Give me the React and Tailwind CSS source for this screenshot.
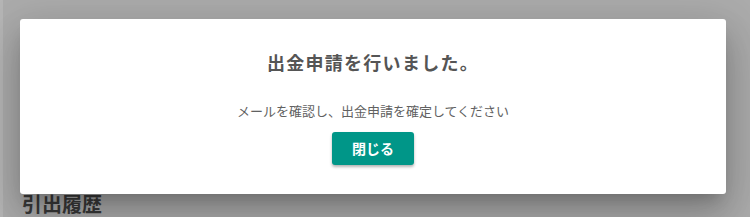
import React from 'react';

export default function App() {
  return (
    <div className="relative w-[750px] h-[217px] overflow-hidden bg-[#acacac] font-['Noto_Sans_CJK_JP',_'Noto_Sans',_sans-serif]">
      {/* page behind the dimmed overlay */}
      <div className="flex h-full">
        <div className="w-[3px] h-full bg-[#b6b6b6]" />
        <div className="flex-1 pl-[19px] pt-[190px]">
          <h2 className="text-[20px] leading-[28px] font-bold text-[#3a3a3a]">引出履歴</h2>
        </div>
      </div>

      {/* dialog */}
      <div className="absolute left-[20px] top-[19px] w-[706px] h-[175px] bg-white rounded-[3px] shadow-[0_11px_15px_-7px_rgba(0,0,0,0.2),0_24px_38px_3px_rgba(0,0,0,0.14),0_9px_46px_8px_rgba(0,0,0,0.12)] flex flex-col items-center pt-[29px]">
        <h1 className="text-[18px] leading-[28px] font-semibold tracking-[0.07em] text-[#555555]">
          出金申請を行いました。
        </h1>
        <p className="mt-[25px] text-[13px] leading-[20px] text-[#616161]">
          メールを確認し、出金申請を確定してください
        </p>
        <button className="mt-[11px] w-[82px] h-[33px] rounded-[3px] bg-[#009688] text-white text-[14px] font-semibold shadow-[0_2px_3px_rgba(0,0,0,0.3)]">
          閉じる
        </button>
      </div>
    </div>
  );
}
